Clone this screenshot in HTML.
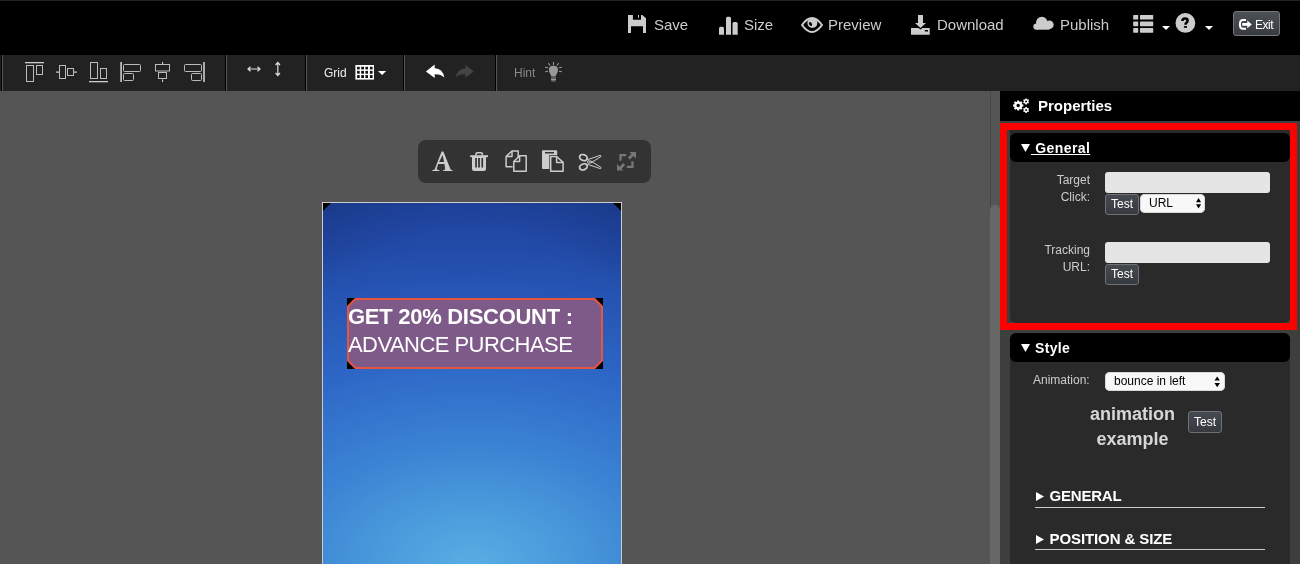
<!DOCTYPE html>
<html><head><meta charset="utf-8">
<style>
*{margin:0;padding:0;box-sizing:border-box}
html,body{width:1300px;height:564px;overflow:hidden;background:#555;font-family:"Liberation Sans",sans-serif}
.abs{position:absolute}
#top{left:0;top:0;width:1300px;height:55px;background:#000}
#topline{left:0;top:0;width:1300px;height:1px;background:#222}
.tt{position:absolute;top:16px;font-size:15px;line-height:18px;color:#ccc;white-space:nowrap}
#tb{left:0;top:55px;width:1300px;height:36px;background:#222}
.sep{position:absolute;top:0;width:2px;height:36px;border-left:1px solid #000;border-right:1px solid #555}
#canvas{left:0;top:91px;width:990px;height:473px;background:#555}
#sb{left:990px;top:91px;width:10px;height:473px;background:#555;border-left:1px solid #474747}
#side{left:1000px;top:91px;width:300px;height:473px;background:#3c3f3c}
.btn{background:linear-gradient(#454950,#363a40);border:1px solid #6e7176;border-radius:3px;color:#fff;font-size:12px;line-height:19px;text-align:center}
.sel{background:#f8f8f8;border-radius:5px;color:#000;font-size:12px;line-height:18px;padding-left:9px;box-shadow:inset 0 0 0 1px #d8d8d8}
</style></head><body><div id="wrap" style="position:absolute;left:0;top:0;width:1300px;height:564px;overflow:hidden;background:#555;will-change:transform">
<div id="top" class="abs">
  <div id="topline" class="abs"></div>
  <!-- Save -->
  <svg class="abs" style="left:628px;top:15px" width="18" height="18" viewBox="0 0 18 18"><path fill="#ccc" fill-rule="evenodd" d="M0,0H14.3L18,3.3V18H15V11.3H3V18H0Z M4.9,0H13V4.7H4.9Z M10,0H11V2.8H10Z"/></svg>
  <div class="tt" style="left:654px">Save</div>
  <!-- Size -->
  <svg class="abs" style="left:719px;top:16px" width="19" height="19" viewBox="0 0 19 19"><g fill="#ccc"><path d="M0,12.2Q0,10.7 1.5,10.7H3.5Q5,10.7 5,12.2V18.8H0Z"/><path d="M7,2.3Q7,0.8 8.5,0.8H10.5Q12,0.8 12,2.3V18.8H7Z"/><path d="M13.5,7.4Q13.5,5.9 15,5.9H17Q18.7,5.9 18.7,7.4V18.8H13.5Z"/></g></svg>
  <div class="tt" style="left:744px">Size</div>
  <!-- Eye -->
  <svg class="abs" style="left:801px;top:17px" width="22" height="16" viewBox="0 0 22 16"><path fill="none" stroke="#ccc" stroke-width="2" d="M1,8Q6,1 11,1Q16,1 21,8Q16,15 11,15Q6,15 1,8Z"/><circle cx="11.4" cy="6" r="5" fill="#ccc"/><ellipse cx="9.5" cy="7" rx="1.4" ry="2" transform="rotate(-35 9.5 7)" fill="#000"/></svg>
  <div class="tt" style="left:828px">Preview</div>
  <!-- Download -->
  <svg class="abs" style="left:911px;top:15px" width="19" height="20" viewBox="0 0 19 20"><g fill="#ccc"><path d="M7,0H12V8H15L9.5,13L4,8H7Z"/><path d="M0,13H7.5L9.5,14.5L11.5,13H18.7V19.8H0Z M13.8,15H17V16.6H13.8Z" fill-rule="evenodd"/></g></svg>
  <div class="tt" style="left:937px">Download</div>
  <!-- Cloud -->
  <svg class="abs" style="left:1033px;top:16px" width="22" height="14" viewBox="0 0 22 14"><g fill="#ccc"><circle cx="8.8" cy="6.6" r="5.8"/><circle cx="3.4" cy="10.6" r="3.1"/><circle cx="16.4" cy="8.7" r="4.3"/><rect x="3.4" y="8" width="13" height="5.7"/></g></svg>
  <div class="tt" style="left:1060px">Publish</div>
  <!-- list -->
  <svg class="abs" style="left:1133px;top:14px" width="21" height="20" viewBox="0 -0.4 21 20"><g fill="#ccc"><rect x="0.2" y="0.6" width="5" height="4.6" rx="0.6"/><rect x="0.2" y="7.2" width="5" height="4.6" rx="0.6"/><rect x="0.2" y="13.7" width="5" height="4.6" rx="0.6"/><rect x="7" y="0.6" width="13.2" height="4.6" rx="0.6"/><rect x="7" y="7.2" width="13.2" height="4.6" rx="0.6"/><rect x="7" y="13.7" width="13.2" height="4.6" rx="0.6"/></g></svg>
  <svg class="abs" style="left:1162px;top:26px" width="8" height="4" viewBox="0 0 8 4"><path d="M0,0H8L4,4Z" fill="#fff"/></svg>
  <!-- help -->
  <svg class="abs" style="left:1175px;top:13px" width="21" height="21" viewBox="0 0 21 21"><circle cx="10.4" cy="9.9" r="9.9" fill="#ccc"/><path fill="none" stroke="#000" stroke-width="2.5" d="M7.4,8.1Q7.4,5.6 10.1,5.6Q12.6,5.6 12.6,7.7Q12.6,9.1 11.3,9.8Q10.5,10.3 10.5,11.8"/><rect x="8.9" y="13.1" width="3.1" height="1.7" fill="#000"/></svg>
  <svg class="abs" style="left:1205px;top:26px" width="8" height="4" viewBox="0 0 8 4"><path d="M0,0H8L4,4Z" fill="#fff"/></svg>
  <!-- exit -->
  <div class="abs" style="left:1233px;top:11px;width:47px;height:25px;border:1px solid #777;border-radius:3px;background:linear-gradient(#4b4f56,#383c42)"></div>
  <svg class="abs" style="left:1238px;top:19px" width="14" height="11" viewBox="0 0 14 11"><path fill="none" stroke="#fff" stroke-width="2" d="M8,1.1H5Q1.9,1.1 1.9,5.4Q1.9,9.7 5,9.7H8"/><path fill="#fff" d="M4.2,4H9.3V1.6L13.8,5.4L9.3,9.2V6.8H4.2Z"/></svg>
  <div class="abs" style="left:1255px;top:18px;font-size:12px;line-height:14px;color:#fff;letter-spacing:-0.5px">Exit</div>
</div>

<div id="tb" class="abs">
  <div class="sep" style="left:1px"></div>
  <div class="sep" style="left:225px"></div>
  <div class="sep" style="left:305px"></div>
  <div class="sep" style="left:403px"></div>
  <div class="sep" style="left:495px"></div>
  <div class="abs" style="left:324px;top:11px;font-size:12px;line-height:14px;color:#eee">Grid</div>
  <div class="abs" style="left:514px;top:11px;font-size:12px;line-height:14px;color:#888">Hint</div>
</div>

<div id="canvas" class="abs"></div>

<svg class="abs" style="left:0;top:0" width="1300" height="100" viewBox="0 0 1300 100">
 <g fill="none" stroke="#bbb" stroke-width="1">
  <!-- align top -->
  <rect x="26.5" y="65.5" width="7" height="16"/><rect x="36.5" y="65.5" width="6" height="9"/>
  <!-- align middle -->
  <rect x="59.5" y="65.5" width="6" height="13"/><rect x="67.5" y="68.5" width="6" height="7"/>
  <!-- align bottom -->
  <rect x="90.5" y="62.5" width="7" height="16"/><rect x="100.5" y="68.5" width="6" height="10"/>
  <!-- align left -->
  <rect x="123.5" y="64.5" width="17" height="7" rx="1"/><rect x="123.5" y="73.5" width="10" height="7" rx="1"/>
  <!-- align center -->
  <rect x="155.5" y="64.5" width="14" height="6.5"/><rect x="158.5" y="72.5" width="8" height="6"/>
  <!-- align right -->
  <rect x="184.5" y="64.5" width="17" height="7" rx="1"/><rect x="191.5" y="73.5" width="10" height="7" rx="1"/>
 </g>
 <g fill="#ccc">
  <rect x="25" y="62" width="19" height="1.3"/>
  <rect x="56" y="71.5" width="3" height="1.2"/><rect x="74" y="71.5" width="3" height="1.2"/>
  <rect x="89" y="81" width="19" height="1.3"/>
  <rect x="120.3" y="62" width="1.6" height="20"/>
  <rect x="162" y="62" width="1.1" height="2.5"/><rect x="162" y="79.5" width="1.1" height="2.5"/>
  <rect x="203.2" y="62" width="1.6" height="20"/>
 </g>
 <!-- arrows -->
 <g fill="none" stroke="#ddd" stroke-width="1.2">
  <path d="M248,69H260 M250.5,66.8L248,69L250.5,71.2 M257.5,66.8L260,69L257.5,71.2"/>
  <path d="M277.8,62.5V75.5 M275.6,65L277.8,62.5L280,65 M275.6,73L277.8,75.5L280,73"/>
 </g>
 <!-- grid icon -->
 <rect x="355.4" y="65" width="18.6" height="14.6" fill="#fff"/>
 <g fill="#111">
  <rect x="357.1" y="66.8" width="2.6" height="2.6"/><rect x="361.2" y="66.8" width="2.8" height="2.6"/><rect x="365.4" y="66.8" width="2.6" height="2.6"/><rect x="369.9" y="66.8" width="2.7" height="2.6"/>
  <rect x="357.1" y="70.9" width="2.6" height="2.8"/><rect x="361.2" y="70.9" width="2.8" height="2.8"/><rect x="365.4" y="70.9" width="2.6" height="2.8"/><rect x="369.9" y="70.9" width="2.7" height="2.8"/>
  <rect x="357.1" y="75.1" width="2.6" height="2.9"/><rect x="361.2" y="75.1" width="2.8" height="2.9"/><rect x="365.4" y="75.1" width="2.6" height="2.9"/><rect x="369.9" y="75.1" width="2.7" height="2.9"/>
 </g>
 <path d="M378,70.9H386.2L382.1,75.1Z" fill="#fff"/>
 <!-- undo redo -->
 <path d="M425.9,71.4L434.7,64.5V68.2Q443,68.6 444.3,77.6Q441,74 434.7,74.2V77.9Z" fill="#fff"/>
 <path d="M473.9,71.4L465.3,65V68.4Q457,68.8 455.9,77.3Q459,74 465.3,74.2V77.7Z" fill="#444"/>
 <!-- bulb -->
 <g fill="#999">
  <path d="M553.4,65.8Q558,65.8 558,70Q558,72.2 556.6,74Q555.8,75.2 555.8,76.6H551.2Q551.2,75.2 550.3,74Q548.9,72.2 548.9,70Q548.9,65.8 553.4,65.8Z"/>
  <rect x="551" y="77.5" width="5" height="1"/><rect x="551" y="79" width="5" height="1"/><rect x="551.3" y="80.4" width="4.4" height="1"/>
 </g>
 <g stroke="#999" stroke-width="1.1" fill="none" stroke-linecap="round">
  <path d="M553.5,62.3V64.8 M548.6,63.5L549.8,65.2 M558.4,63.5L557.2,65.2 M545.5,67.2L547.7,67.8 M545.5,71.7L547.7,71.2 M561.5,67.2L559.3,67.8 M561.5,71.7L559.3,71.2"/>
 </g>
</svg>


<!-- floating toolbar -->
<div class="abs" style="left:418px;top:140px;width:233px;height:43px;background:#333;border-radius:8px"></div>
<svg class="abs" style="left:0;top:140px" width="700" height="40" viewBox="0 140 700 40"><path fill="#ccc" fill-rule="evenodd" d="M441.6,151.6H443.4L450.6,169.4L452.8,170.4V171.1H442.9V170.4L445.2,169.6L444.5,163.9H438.2L436.6,169.3L439.7,170.4V171.1H432V170.4L434.6,169.4Z M442.6,155L444.1,161.9H439.1Z"/></svg>
<svg class="abs" style="left:0;top:130px" width="700" height="60" viewBox="0 130 700 60">
 <!-- trash -->
 <g fill="#ccc">
  <path d="M470.2,155.2H488V157.2H470.2Z"/>
  <path d="M475.2,155.5V154Q475.2,152 477.2,152H481.1Q483.1,152 483.1,154V155.5H481.6V154.2Q481.6,153.4 480.8,153.4H477.5Q476.7,153.4 476.7,154.2V155.5Z"/>
  <path fill-rule="evenodd" d="M472,157H486V169Q486,171.1 484,171.1H474Q472,171.1 472,169Z M475.2,157.9H476.9V167.4H475.2Z M478.1,157.9H479.9V167.4H478.1Z M481.4,157.9H483.1V167.4H481.4Z"/>
 </g>
 <!-- copy -->
 <g fill="none" stroke="#ccc" stroke-width="1.5" stroke-linejoin="round">
  <path d="M512.6,166.8H506.1V156.6L512,151H518.2V157.5"/>
  <path d="M506.1,156.6H512V151"/>
  <path d="M519.6,155.8H526.2V171.3H513.8V161.5L519.6,155.8Z"/>
  <path d="M513.8,161.5H519.6V155.8"/>
 </g>
 <!-- paste -->
 <path fill="#ccc" fill-rule="evenodd" d="M543,150.3H556.2Q557.2,150.3 557.2,151.3V155.1H549.3V168.9H543Q542,168.9 542,167.9V151.3Q542,150.3 543,150.3Z M545,152.1H554V153.4H545Z"/>
 <g fill="none" stroke="#ccc" stroke-width="1.5" stroke-linejoin="round">
  <path d="M550.7,156.5H556.6L563.1,162.4V171.3H550.7Z"/>
  <path d="M556.6,156.5V162.4H563.1"/>
 </g>
 <!-- scissors -->
 <g fill="none" stroke="#ccc">
  <ellipse cx="583.4" cy="157.6" rx="3.9" ry="2.9" transform="rotate(22 583.4 157.6)" stroke-width="1.8"/>
  <ellipse cx="583.4" cy="166.9" rx="3.9" ry="2.9" transform="rotate(-22 583.4 166.9)" stroke-width="1.8"/>
  <circle cx="588.9" cy="162" r="1.3" stroke-width="1"/>
  <path stroke-width="1" stroke-linejoin="round" d="M586.8,159.9L600.2,155.4Q601.6,155.6 600.8,156.7L590.2,163.3 M586.8,164.1L600.2,168.6Q601.6,168.4 600.8,167.3L590.2,160.7"/>
 </g>
 <!-- expand -->
 <g fill="#777">
  <path d="M636,152H629.5L631.4,153.9L627.8,157.5L629.8,159.5L633.4,155.9L636,158.5Z"/>
  <path d="M617,170.6H623.5L621.6,168.7L625.2,165.1L623.2,163.1L619.6,166.7L617,164.1Z"/>
  <path d="M619.4,154H626.2V156.3H621.7V160.8H619.4Z"/>
  <path d="M633.6,168H626.8V165.7H631.3V161.2H633.6Z"/>
 </g>
</svg>

<!-- banner -->
<div class="abs" style="left:322px;top:202px;width:300px;height:362px;border:1px solid #ccc;border-bottom:none;overflow:hidden;background:radial-gradient(ellipse 100% 100% at 50% 88%, rgba(5,15,50,0) 80%, rgba(5,15,50,0.2) 105%),radial-gradient(ellipse 230% 120% at 50% 100%, #57aee3 0%, #4b9cdc 12%, #3a82d3 28%, #2d66c6 48%, #2149a6 75%, #1b3b8f 100%)">
  <div class="abs" style="left:0;top:0;width:0;height:0;border-top:8px solid #000;border-right:8px solid transparent"></div>
  <div class="abs" style="right:0;top:0;width:0;height:0;border-top:8px solid #000;border-left:8px solid transparent"></div>
  <svg class="abs" style="left:24px;top:95px" width="256" height="71" viewBox="0 0 256 71">
    <rect width="256" height="71" fill="#000"/>
    <path d="M8.4,1H247.6L255,8.4V62.6L247.6,70H8.4L1,62.6V8.4Z" fill="#7d5a88" stroke="#e8553f" stroke-width="2"/>
  </svg>
  <div class="abs" style="left:25px;top:99.5px;font-size:22px;line-height:28px;color:#fff;font-weight:bold;white-space:nowrap;letter-spacing:-0.28px">GET 20% DISCOUNT :</div>
  <div class="abs" style="left:25px;top:127.5px;font-size:22px;line-height:28px;color:#fff;white-space:nowrap;letter-spacing:-0.55px">ADVANCE PURCHASE</div>
</div>
<div id="sb" class="abs"></div>
<div class="abs" style="left:990px;top:205px;width:10px;height:400px;border-radius:5px;background:#676767"></div>
<div id="side" class="abs"></div>

<div class="abs" style="left:1000px;top:91px;width:300px;height:30px;background:#000"></div>
<svg class="abs" style="left:1012px;top:98px" width="18" height="16" viewBox="0 0 18 16"><path fill="#fff" fill-rule="evenodd" d="M9.80,6.01 L9.91,6.29 L11.31,6.56 L11.31,8.44 L9.91,8.71 L9.80,8.99 L9.68,9.26 L10.48,10.45 L9.15,11.78 L7.96,10.98 L7.69,11.10 L7.41,11.21 L7.14,12.61 L5.26,12.61 L4.99,11.21 L4.71,11.10 L4.44,10.98 L3.25,11.78 L1.92,10.45 L2.72,9.26 L2.60,8.99 L2.49,8.71 L1.09,8.44 L1.09,6.56 L2.49,6.29 L2.60,6.01 L2.72,5.74 L1.92,4.55 L3.25,3.22 L4.44,4.02 L4.71,3.90 L4.99,3.79 L5.26,2.39 L7.14,2.39 L7.41,3.79 L7.69,3.90 L7.96,4.02 L9.15,3.22 L10.48,4.55 L9.68,5.74Z M7.90,7.50 A1.7,1.7 0 1,0 4.50,7.50 A1.7,1.7 0 1,0 7.90,7.50Z M16.40,3.40 L16.38,3.69 L17.06,4.31 L16.37,5.51 L15.49,5.23 L15.25,5.39 L14.99,5.52 L14.79,6.42 L13.41,6.42 L13.21,5.52 L12.95,5.39 L12.71,5.23 L11.83,5.51 L11.14,4.31 L11.82,3.69 L11.80,3.40 L11.82,3.11 L11.14,2.49 L11.83,1.29 L12.71,1.57 L12.95,1.41 L13.21,1.28 L13.41,0.38 L14.79,0.38 L14.99,1.28 L15.25,1.41 L15.49,1.57 L16.37,1.29 L17.06,2.49 L16.38,3.11Z M15.05,3.40 A0.95,0.95 0 1,0 13.15,3.40 A0.95,0.95 0 1,0 15.05,3.40Z M16.40,12.00 L16.38,12.29 L17.06,12.91 L16.37,14.11 L15.49,13.83 L15.25,13.99 L14.99,14.12 L14.79,15.02 L13.41,15.02 L13.21,14.12 L12.95,13.99 L12.71,13.83 L11.83,14.11 L11.14,12.91 L11.82,12.29 L11.80,12.00 L11.82,11.71 L11.14,11.09 L11.83,9.89 L12.71,10.17 L12.95,10.01 L13.21,9.88 L13.41,8.98 L14.79,8.98 L14.99,9.88 L15.25,10.01 L15.49,10.17 L16.37,9.89 L17.06,11.09 L16.38,11.71Z M15.05,12.00 A0.95,0.95 0 1,0 13.15,12.00 A0.95,0.95 0 1,0 15.05,12.00Z"/></svg>
<div class="abs" style="left:1038px;top:97px;font-size:15px;line-height:18px;font-weight:bold;color:#fff">Properties</div>

<!-- general section -->
<div class="abs" style="left:1010px;top:130px;width:280px;height:193px;background:#2a2a2a;border-radius:0 0 6px 6px"></div>
<div class="abs" style="left:1010px;top:133px;width:280px;height:29px;background:#000;border-radius:6px"></div>
<div class="abs" style="left:1000px;top:123px;width:297px;height:7px;background:#f00"></div>
<div class="abs" style="left:1000px;top:123px;width:7px;height:207px;background:#f00"></div>
<div class="abs" style="left:1290px;top:123px;width:7px;height:207px;background:#f00"></div>
<div class="abs" style="left:1000px;top:323px;width:297px;height:7px;background:#f00"></div>
<svg class="abs" style="left:1021px;top:144px" width="9" height="8" viewBox="0 0 9 8"><path d="M0,0H9L4.5,8Z" fill="#fff"/></svg>
<div class="abs" style="left:1031px;top:140px;font-size:14px;line-height:17px;font-weight:bold;color:#fff;text-decoration:underline;white-space:pre;letter-spacing:0.4px"> General</div>

<div class="abs lbl" style="left:1040px;top:172px;width:50px;text-align:right;font-size:12px;line-height:17px;color:#ccc">Target<br>Click:</div>
<div class="abs" style="left:1105px;top:172px;width:165px;height:21px;background:#e5e5e5;border-radius:3px"></div>
<div class="abs btn" style="left:1105px;top:194px;width:34px;height:21px">Test</div>
<div class="abs sel" style="left:1140px;top:194px;width:65px;height:19px">URL</div>

<div class="abs lbl" style="left:1030px;top:242px;width:60px;text-align:right;font-size:12px;line-height:17px;color:#ccc">Tracking<br>URL:</div>
<div class="abs" style="left:1105px;top:242px;width:165px;height:21px;background:#e5e5e5;border-radius:3px"></div>
<div class="abs btn" style="left:1105px;top:264px;width:34px;height:21px">Test</div>

<!-- style section -->
<div class="abs" style="left:1010px;top:333px;width:280px;height:231px;background:#2a2a2a;border-radius:6px 6px 0 0"></div>
<div class="abs" style="left:1010px;top:333px;width:280px;height:29px;background:#000;border-radius:6px"></div>
<svg class="abs" style="left:1021px;top:344px" width="9" height="8" viewBox="0 0 9 8"><path d="M0,0H9L4.5,8Z" fill="#fff"/></svg>
<div class="abs" style="left:1035px;top:340px;font-size:14px;line-height:17px;font-weight:bold;color:#fff;letter-spacing:0.35px">Style</div>
<div class="abs" style="left:1033px;top:372px;font-size:12px;line-height:17px;color:#ccc">Animation:</div>
<div class="abs sel" style="left:1105px;top:372px;width:120px;height:19px">bounce in left</div>
<div class="abs" style="left:1070px;top:402px;width:125px;text-align:center;font-size:18px;line-height:25px;font-weight:bold;color:#d6d6d6">animation<br>example</div>
<div class="abs btn" style="left:1188px;top:411px;width:34px;height:22px;line-height:21px">Test</div>

<svg class="abs" style="left:1036px;top:492px" width="8" height="9" viewBox="0 0 8 9"><path d="M0,0V9L8,4.5Z" fill="#fff"/></svg>
<div class="abs" style="left:1049.5px;top:487px;font-size:15px;line-height:18px;font-weight:bold;color:#fff;letter-spacing:-0.2px">GENERAL</div>
<div class="abs" style="left:1035px;top:507px;width:230px;height:1px;background:#ccc"></div>
<svg class="abs" style="left:1036px;top:535px" width="8" height="9" viewBox="0 0 8 9"><path d="M0,0V9L8,4.5Z" fill="#fff"/></svg>
<div class="abs" style="left:1049.5px;top:530px;font-size:15px;line-height:18px;font-weight:bold;color:#fff;letter-spacing:-0.1px">POSITION &amp; SIZE</div>
<div class="abs" style="left:1035px;top:549px;width:230px;height:1px;background:#ccc"></div>

<svg class="abs" style="left:0;top:0" width="1300" height="564" viewBox="0 0 1300 564"><g fill="#000">
<path d="M1196,202.2H1201.1L1198.55,198Z M1196,204.3H1201.1L1198.55,208.6Z"/>
<path d="M1214.5,380.6H1219.9L1217.2,376.4Z M1214.5,382.9H1219.9L1217.2,387.2Z"/>
</g></svg>
</div></body></html>
